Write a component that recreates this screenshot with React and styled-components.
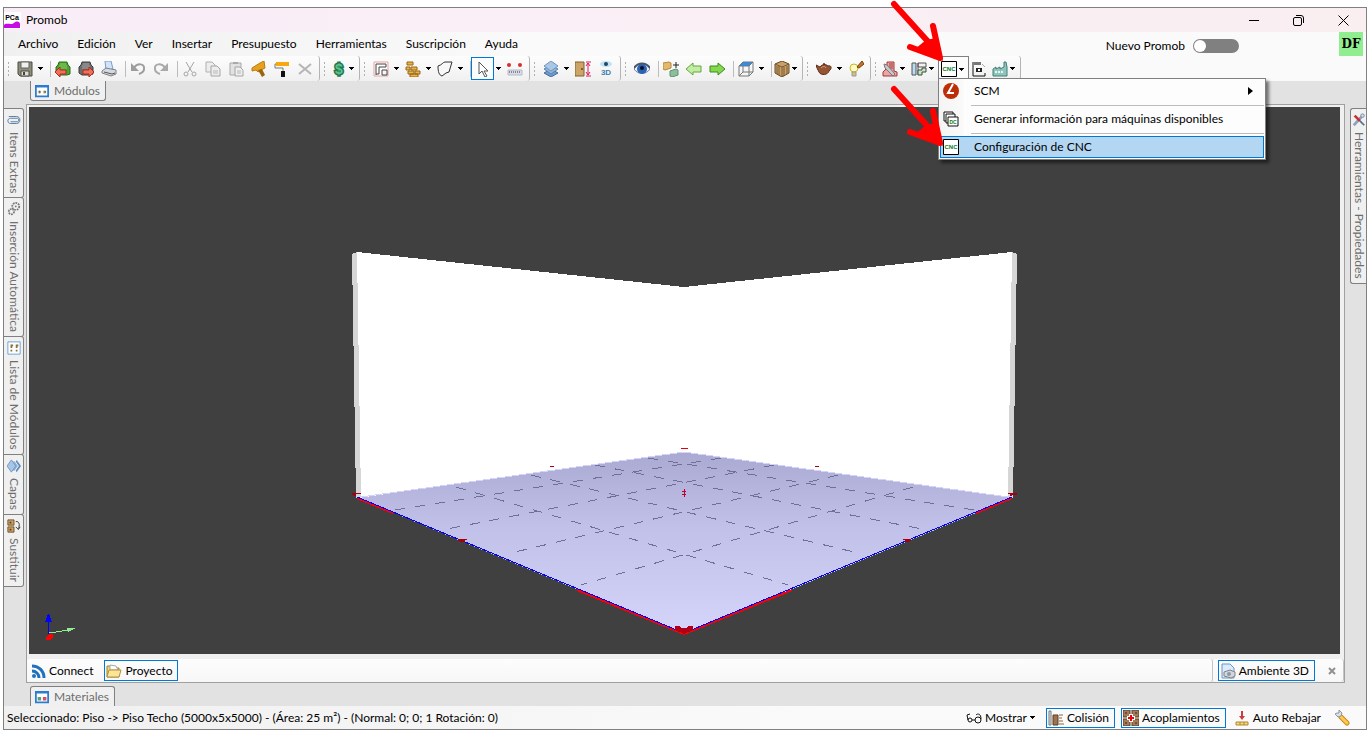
import React, { useState } from "react";
import styled, { createGlobalStyle, css } from "styled-components";

const colors = {
    chrome: "#e2e2e2",
    border: "#808080",
    line: "#a0a0a0",
    panel: "#f0f0f0",
    accent: "#0078d7",
    highlight: "#b3d7f3",
    viewport: "#404040",
    tabText: "#6d6d6d",
};

const GlobalStyle = createGlobalStyle`
    * { box-sizing: border-box; }
    body {
        margin: 0;
        background: #fff;
        color: #000;
        font-family: Lato, "Open Sans", sans-serif;
        font-size: 12px;
        line-height: 16px;
    }
    button, input {
        font: inherit;
        color: inherit;
    }
    svg { display: block; flex: none; }
`;

const Page = styled.div`
    display: flex;
    min-height: 100vh;
    padding: 7px 2px 7px 3px;
`;

const Window = styled.div`
    flex: 1;
    min-width: 0;
    display: flex;
    flex-direction: column;
    border: 1px solid ${colors.border};
    background: ${colors.chrome};
`;

const TitleBar = styled.header`
    display: flex;
    align-items: center;
    height: 24px;
    background: linear-gradient(90deg, #f9eef8, #f9eff1);
`;

const Title = styled.h1`
    flex: 1;
    margin: 0 0 0 5px;
    font-size: 12px;
    font-weight: 400;
`;

const WindowButton = styled.button`
    display: flex;
    align-items: center;
    justify-content: center;
    width: 45px;
    height: 24px;
    padding: 0;
    border: 0;
    background: none;
`;

const HeaderArea = styled.div`
    background: linear-gradient(90deg, #f0f0f0, #fafafa 40%);
`;

const MenuBar = styled.nav`
    display: flex;
    align-items: flex-start;
    gap: 1px;
    height: 24px;
    padding-left: 5px;
`;

const MenuButton = styled.button`
    height: 24px;
    padding: 0 9px;
    border: 0;
    background: none;
`;

const Spacer = styled.div`
    flex: 1;
`;

const SwitchLabel = styled.label`
    display: flex;
    align-items: center;
    gap: 8px;
    height: 27px;
    margin-right: 99px;
`;

const Switch = styled.input`
    appearance: none;
    display: flex;
    align-items: center;
    width: 46px;
    height: 14px;
    margin: 0;
    padding: 1px;
    border-radius: 7px;
    background: ${colors.border};

    &::before {
        content: "";
        width: 12px;
        height: 12px;
        border-radius: 50%;
        background: #fff;
    }
    &:checked { justify-content: flex-end; }
`;

const UserBadge = styled.button`
    width: 24px;
    height: 24px;
    margin-right: 3px;
    padding: 0;
    border: 0;
    background: #90ee90;
    font-family: "DejaVu Serif", serif;
    font-size: 12px;
    font-weight: 700;
`;

const ToolBar = styled.div`
    display: flex;
    height: 25px;
`;

const ToolGroup = styled.div`
    display: flex;
    align-items: center;
    height: 25px;
    padding-right: ${(props) => (props.$snug ? "1px" : "3px")};
    border-right: 1px solid #b4b4b4;
    border-radius: 0 3px 3px 0;
    background: linear-gradient(#fdfdfd, #f0f0f0);
`;

const Grip = styled.span`
    width: 9px;
    height: 15px;
    background: radial-gradient(circle, #b0b0b0 1px, transparent 1px) 3px 0 / 3px 4px repeat-y;
`;

const ToolButton = styled.button`
    display: flex;
    align-items: center;
    justify-content: center;
    width: ${(props) => (props.$snug ? "20px" : "23px")};
    height: 23px;
    padding: 0;
    border: 1px solid ${(props) => (props.$active ? colors.accent : "transparent")};
    background: ${(props) => (props.$active ? "#fbfcfe" : "none")};
`;

const CaretButton = styled.button`
    display: flex;
    align-items: center;
    justify-content: ${(props) => (props.$snug ? "flex-start" : "center")};
    width: 9px;
    height: 23px;
    padding: 0;
    border: 0;
    background: none;
`;

const ToolSeparator = styled.span`
    width: 6px;
    height: 16px;
    border-right: 1px solid #bdbdbd;
`;

const CncAnchor = styled.div`
    position: relative;
    display: flex;
    align-items: center;
    height: 25px;
    border: 1px solid ${colors.border};
    border-bottom: 0;
    background: #fcfcfc;
    margin-right: -2px;
`;

const Menu = styled.ul`
    position: absolute;
    z-index: 2;
    top: 21px;
    left: -1px;
    width: 328px;
    margin: 0;
    padding: 1px;
    list-style: none;
    border: 1px solid ${colors.border};
    background: linear-gradient(90deg, #f4f4f4, #fafafa 24px, #fdfdfd 25px);
    box-shadow: 3px 3px 3px rgba(0, 0, 0, 0.5);
`;

const MenuItem = styled.button`
    display: flex;
    align-items: center;
    gap: 15px;
    width: 100%;
    height: 22px;
    padding: 0 10px 0 2px;
    text-align: left;
    border: 1px solid ${(props) => (props.$active ? colors.accent : "transparent")};
    background: ${(props) => (props.$active ? colors.highlight : "none")};
`;

const MenuLabel = styled.span`
    flex: 1;
`;

const MenuDivider = styled.li`
    height: 1px;
    margin: 3px 0 2px 31px;
    background: #bdbdbd;
`;

const Pointer = styled.svg`
    position: absolute;
    z-index: 3;
    left: -49px;
    top: ${(props) => props.$top};
    pointer-events: none;
`;

const Body = styled.div`
    flex: 1;
    display: flex;
    min-height: 0;
`;

const SideStrip = styled.aside`
    width: 22px;
    padding-top: 27px;
    ${(props) => props.$right && css`
        width: 21px;
        padding-left: 5px;
    `}
`;

const SideTab = styled.button`
    display: flex;
    align-items: center;
    gap: 5px;
    width: 20px;
    height: auto;
    margin-bottom: -1px;
    padding: 4px 0;
    writing-mode: vertical-rl;
    color: ${colors.tabText};
    border: 1px solid ${colors.border};
    background: ${colors.panel};
    ${(props) => props.$right ? css`
        width: 16px;
        border-right: 0;
        border-radius: 3px 0 0 3px;
    ` : css`
        border-left: 0;
        border-radius: 0 3px 3px 0;
    `}
`;

const Center = styled.main`
    flex: 1;
    min-width: 0;
    display: flex;
    flex-direction: column;
`;

const DockTab = styled.button`
    display: flex;
    align-items: center;
    gap: 5px;
    height: 20px;
    margin: ${(props) => (props.$bottom ? "3px 0 0 4px" : "0 0 3px 4px")};
    align-self: flex-start;
    padding: 0 5px 0 4px;
    color: ${colors.tabText};
    border: 1px solid ${colors.border};
    background: ${colors.panel};
    ${(props) => props.$bottom ? css`
        border-bottom: 0;
        border-radius: 3px 3px 0 0;
    ` : css`
        border-top: 0;
        border-radius: 0 0 3px 3px;
    `}
`;

const Panel = styled.section`
    flex: 1;
    display: flex;
    flex-direction: column;
    gap: 5px;
    min-height: 0;
    border: 1px solid ${colors.line};
    background: ${colors.panel};
`;

const Viewport = styled.div`
    flex: 1;
    display: flex;
    min-height: 0;
    margin: 2px 4px 0 2px;
    background: ${colors.viewport};

    svg {
        flex: 1;
        width: 100%;
        min-width: 0;
    }
`;

const PanelBar = styled.div`
    display: flex;
    justify-content: space-between;
    height: 23px;
`;

const BarSection = styled.div`
    display: flex;
    align-items: center;
    gap: 6px;
    padding: 0 ${(props) => (props.$closable ? "4px" : "0")} 0 ${(props) => (props.$closable ? "5px" : "1px")};
    flex: ${(props) => (props.$grow ? 1 : "none")};
    border-right: 1px solid #c4c4c4;
    border-radius: 3px;
    background: linear-gradient(#fdfdfd, #f7f7f7);
`;

const BarButton = styled.button`
    display: flex;
    align-items: center;
    gap: 3px;
    height: ${(props) => (props.$low ? "20px" : "21px")};
    padding: 0 ${(props) => (props.$active ? "5px" : "4px")} 0 1px;
    white-space: nowrap;
    border: 1px solid ${(props) => (props.$active ? colors.accent : "transparent")};
    background: none;
`;

const CloseButton = styled.button`
    display: flex;
    margin-left: 4px;
    padding: 2px;
    border: 0;
    background: none;
`;

const StatusBar = styled.footer`
    display: flex;
    align-items: center;
    gap: 6px;
    height: 23px;
    padding: 0 11px 0 3px;
    background: linear-gradient(90deg, #f0f0f0, #fafafa 60%);
`;

const StatusText = styled.p`
    flex: 1;
    margin: 0;
    white-space: nowrap;
`;

const drawings = {
    save: <><path d="M1 1h14v14H3l-2-2z" fill="#8d8d7b" stroke="#4c4c42" /><path d="M4 1h8v6H4z" fill="#eef0f4" stroke="#66665c" /><path d="M4 10h8v5H4z" fill="#dcdcd0" stroke="#4c4c42" /><path d="M6 11h2v3H6z" fill="#444" /></>,
    chairIn: <><path d="M4 1h8l1 3 2 2v7l-3 1H4l-3-2V6l2-2z" fill="#4aa52e" stroke="#2d6e1c" /><path d="M5 3h6M4 5h8M5 7h7" stroke="#86d166" /><path d="M0 11l5-5v3h6v4H5v3z" fill="#f0705c" stroke="#b22a1c" /></>,
    chairOut: <><path d="M4 1h8l1 3 2 2v7l-3 1H4l-3-2V6l2-2z" fill="#6d6d6d" stroke="#3d3d3d" /><path d="M5 3h6M4 5h8M4 7h7" stroke="#a6a6a6" /><path d="M16 11l-5-5v3H5v4h6v3z" fill="#f0705c" stroke="#b22a1c" /></>,
    printer: <><path d="M4 0h6l2 8-7 1z" fill="#cfe3fa" stroke="#7f9cc4" /><path d="M1 10l4-3 10 2v4l-5 2-9-3z" fill="#d6d9de" stroke="#7d828c" /><path d="M3 11l8 2 3-1" stroke="#555" fill="none" /></>,
    undo: <><path d="M4 7c3-5 11-5 10 1 0 2-2 4-5 5" fill="none" stroke="#9d9d9d" strokeWidth="2" /><path d="M1 2v8h8z" fill="#9d9d9d" /></>,
    redo: <><path d="M12 7C9 2 1 2 2 8c0 2 2 4 5 5" fill="none" stroke="#a9a9a9" strokeWidth="2" /><path d="M15 2v8H7z" fill="#a9a9a9" /></>,
    cut: <><path d="M4 1l6 10M12 1L6 11" stroke="#a5a5a5" fill="none" /><circle cx="4" cy="13" r="2" fill="none" stroke="#a5a5a5" /><circle cx="12" cy="13" r="2" fill="none" stroke="#a5a5a5" /></>,
    copy: <><path d="M1 1h6l3 3v7H1z" fill="#ededed" stroke="#b0b0b0" /><path d="M6 5h6l3 3v7H6z" fill="#ededed" stroke="#a5a5a5" /><path d="M8 10h5M8 12h5" stroke="#b8b8b8" /></>,
    paste: <><path d="M2 2h11v12H2z" fill="#e2e2e2" stroke="#a9a9a9" /><path d="M5 1h5v2H5z" fill="#aaa" /><path d="M7 6h5l3 3v6H7z" fill="#efefef" stroke="#a5a5a5" /><path d="M9 10h4M9 12h4" stroke="#b8b8b8" /></>,
    hammer: <><path d="M1 7l8-5 4-2 1 7-4 2-3 2-2-2-4 1z" fill="#e6a21c" stroke="#b87a10" /><path d="M7 9l4-1 3 6-3 2z" fill="#9a6412" /></>,
    roller: <><path d="M2 1h13v4H2z" fill="#f7a80c" /><path d="M2 3H1v4h8v3" fill="none" stroke="#777" /><path d="M7 10h4v6H7z" fill="#111" /></>,
    remove: <path d="M2 3l12 10M14 3L2 13" stroke="#b5b5b5" strokeWidth="2" />,
    walls: <><path d="M1 1h14v14H1z" fill="#fff" stroke="#e9a0a0" /><path d="M3 14V3h10v3H6v7H3" fill="none" stroke="#444" /><path d="M9 9h5v5H9z" fill="#f7f7f7" stroke="#444" /></>,
    bricks: <><path d="M2 1h6v3H2zM1 6h4v3H1zM6 6h6v3H6zM3 10h6v3H3zM10 10h5v3h-5zM5 13h8v3H5z" fill="#e6b455" stroke="#9a660e" /></>,
    shape: <path d="M1 5c4-1 5-4 7-4h7l-3 10-3 1-4 3c-3-1-4-4-4-10z" fill="#f8f8f8" stroke="#333" />,
    pointer: <path d="M4 1v12l3-3 3 6 2-1-3-5h4z" fill="#fff" stroke="#555" />,
    measure: <><path d="M1 9h14v5H1z" fill="#d9dce8" stroke="#b6bac8" /><path d="M2 11h12" stroke="#333" strokeDasharray="1 1" /><circle cx="2" cy="4" r="2" fill="#d92e2e" /><circle cx="13" cy="4" r="2" fill="#d92e2e" /></>,
    layers: <><path d="M8 8l7 4-7 4-7-4z" fill="#6c9acb" stroke="#456c9a" /><path d="M8 4l7 4-7 5-7-5z" fill="#8fb4da" stroke="#5c84b0" /><path d="M8 0l7 5-7 5-7-5z" fill="#a9c7e6" stroke="#7495b9" /></>,
    door: <><path d="M0 1h9v14H0z" fill="#cda468" stroke="#80602f" /><circle cx="7" cy="8" r="1" fill="#64460e" /><path d="M13 2v12M11 1h5M11 15h5M11 5l2-3 2 3M11 11l2 3 2-3" fill="none" stroke="#df1c57" /></>,
    eye3d: <><ellipse cx="8" cy="3" rx="6" ry="3" fill="#bfe3f6" /><circle cx="8" cy="3" r="2" fill="#1f4763" /></>,
    eye: <><path d="M0 8c4-7 12-7 16 0-4 6-12 6-16 0z" fill="#eef2f8" stroke="#7886a0" /><circle cx="8" cy="8" r="5" fill="#2b63b4" /><circle cx="8" cy="7" r="2" fill="#06142c" /><path d="M0 7c4-6 12-6 16 0" fill="none" stroke="#47566e" strokeWidth="2" /></>,
    boxes: <><path d="M0 2l6-1 2 1v5l-6 2-2-1z" fill="#e3b96c" stroke="#b4883e" /><path d="M7 10l6-2 2 1v5l-6 2-2-1z" fill="#8bbf9e" stroke="#5d8f70" /><path d="M10 4h6M13 1v6" stroke="#222" fill="none" /></>,
    arrowLeft: <path d="M0 8l7-6v3h8v6H7v3z" fill="#c4eca4" stroke="#60a83c" />,
    arrowRight: <path d="M16 8L9 2v3H1v6h8v3z" fill="#84d850" stroke="#3f8a20" />,
    cube: <><path d="M1 5l4-4h10l-4 4z" fill="#2e8ef0" /><path d="M1 5h10v10H1zM11 5l4-4v10l-4 4M1 5l4-4h10M5 5v6h10M5 11l-4 4" fill="none" stroke="#777" /></>,
    wood: <><path d="M8 0l7 3v9l-7 4-7-4V3z" fill="#c9a16b" stroke="#684a20" /><path d="M1 3l7 3 7-3M8 6v10M3 5v8M5 5v9M10 6v9M13 5v8" fill="none" stroke="#7a5a2c" /></>,
    teapot: <><path d="M0 4l4 2c2-3 6-3 8-1 4-1 4 3 1 5-1 4-8 5-10 1L1 7z" fill="#955533" stroke="#5c2f19" /><path d="M5 7c2-2 4-2 5 0" stroke="#dba380" fill="none" /><circle cx="8" cy="3" r="1" fill="#5c2f19" /></>,
    bulb: <><circle cx="6" cy="7" r="4" fill="#fffac0" stroke="#c8b42c" /><path d="M4 11h4v4H4z" fill="#d0c478" stroke="#999" /><path d="M9 6l5-6 2 3-5 4z" fill="#c5761c" stroke="#774010" /></>,
    tool: <><path d="M5 1h7v9l3 1v4H1v-4l4-4z" fill="#e9a6a6" stroke="#a83636" /><path d="M7 3h4M7 5h4M7 7h4" stroke="#a83636" /><path d="M2 3l3 1 8 9-2 2L3 7z" fill="#c8c8c8" stroke="#777" /></>,
    cutlist: <><path d="M1 2h4v12H1z" fill="#b7dcf4" stroke="#555" /><path d="M7 2h8v4H7zM7 2v12" fill="#f1f1f1" stroke="#555" /><path d="M7 9h4V7h4v4h-4v3H7z" fill="#c0ecc0" stroke="#444" /></>,
    cnc: <path d="M.5 .5h15v15H.5z" fill="#fff" stroke="#000" />,
    label: <><path d="M2 1v14h12v-3" fill="none" stroke="#111" /><path d="M3 1h7v3H3z" fill="#777" /><path d="M5 7h6v4H5z" fill="#222" /><path d="M7 8h2v2H7z" fill="#fff" /><path d="M11 3l3 3" stroke="#aaa" /></>,
    factory: <><path d="M1 15V8l3-2v2l4-2v2l4-2V1h2l1 5v9z" fill="#8fc5bd" stroke="#407f78" /><path d="M3 11h9" stroke="#e5f4f1" strokeDasharray="2 1" strokeWidth="2" /></>,
    scm: <><circle cx="8" cy="8" r="8" fill="#bd2d08" /><path d="M10 1L5 10h6" fill="none" stroke="#fff" strokeWidth="2" /></>,
    stack: <><path d="M1 1h9v9H1z" fill="#fff" stroke="#111" /><path d="M3 3h9v9H3z" fill="#fff" stroke="#111" /><path d="M5 6h10v9H5z" fill="#fff" stroke="#111" /></>,
    clip: <path d="M2 4h9c5 0 5 8 0 8H4c-4 0-4-6 0-6h8c2 0 2 4 0 4H4" fill="none" stroke="#4c759c" />,
    gears: <><circle cx="10" cy="5" r="4" fill="none" stroke="#777" strokeDasharray="2 1" strokeWidth="2" /><circle cx="5" cy="11" r="3" fill="none" stroke="#777" strokeDasharray="2 1" strokeWidth="2" /><circle cx="10" cy="5" r="1" fill="#777" /></>,
    list: <><path d="M1 1h14v14H1z" fill="#fff" stroke="#5b9bd5" /><path d="M4 5h3M10 5h3M5 6v2M11 6v2M4 11h2M10 11h2" stroke="#8a6e3c" strokeWidth="2" /></>,
    layersSide: <><path d="M7 8l4-7 5 7-5 7z" fill="#5d8dc0" /><path d="M3 8l5-7 5 7-5 7z" fill="#8db2da" stroke="#fff" /><path d="M0 8l5-7 5 7-5 7z" fill="#a8c6e4" stroke="#6e95bf" /></>,
    swap: <><path d="M1 1h7v6H1zM1 9h7v6H1z" fill="#caa06a" stroke="#6c4a20" /><path d="M3 4h2M3 12h2" stroke="#5a3a10" strokeWidth="2" /><path d="M10 3c4-1 5 4 3 8M10 9l3 3 2-3" fill="none" stroke="#222" /></>,
    crossTools: <><path d="M2 14L13 2" stroke="#8ea2b8" strokeWidth="3" /><path d="M3 3l6 6" stroke="#c72e35" strokeWidth="3" /><path d="M9 9l5 5" stroke="#52708f" strokeWidth="2" /><circle cx="12" cy="3" r="2" fill="#d5e0ec" stroke="#6b829b" /></>,
    modules: <><path d="M1 2h14v12H1z" fill="#fff" stroke="#2b7cd3" strokeWidth="2" /><path d="M1 2h14v2H1z" fill="#2b7cd3" /><circle cx="5" cy="9" r="2" fill="#c5bc9a" /><circle cx="11" cy="9" r="2" fill="#c5bc9a" /><path d="M5 9h1M11 9h1" stroke="#222" strokeWidth="2" /></>,
    materials: <><path d="M1 2h14v12H1z" fill="#fff" stroke="#2b7cd3" strokeWidth="2" /><path d="M1 2h14v2H1z" fill="#2b7cd3" /><path d="M3 8h4v4H3z" fill="#59a17b" /><path d="M9 8h4v4H9z" fill="#d4525a" /></>,
    feed: <><circle cx="4" cy="13" r="2" fill="#1f71be" /><path d="M2 8c4 0 7 3 7 7M2 3c7 0 12 5 12 12" fill="none" stroke="#1f71be" strokeWidth="3" /></>,
    folder: <><path d="M1 3h5l1 2h6v9H1z" fill="#f3d472" stroke="#a3802b" /><path d="M4 2l6 1 2 4H4z" fill="#fff" stroke="#aaa" /><path d="M3 7h12l-2 7H1z" fill="#fbe596" stroke="#b4913a" /></>,
    scene: <><path d="M2 1h8l4 4v10H2z" fill="#dcebfb" stroke="#6f94c2" /><path d="M4 9l6-2 5 2v4l-4 2-7-2z" fill="#d4d6da" stroke="#7c828c" /><circle cx="9" cy="11" r="2" fill="#8e99a8" /></>,
    close: <path d="M2 2l6 6M8 2L2 8" stroke="#909090" strokeWidth="2" />,
    glasses: <><circle cx="4" cy="10" r="2" fill="none" stroke="#111" /><circle cx="12" cy="10" r="3" fill="none" stroke="#111" /><path d="M6 10h3M2 10L1 5l3-1M15 9c0-5-3-6-5-4" fill="none" stroke="#111" /></>,
    collision: <><path d="M1 1h2v14H1z" fill="#e8e8e8" stroke="#777" /><path d="M5 5h5v10H5z" fill="#9c7350" stroke="#5c3c22" /><path d="M11 5h4M11 8h3M11 11h4M11 14h5" stroke="#8a6848" /></>,
    joints: <><path d="M0 0h7v7H0zM9 0h7v7H9zM0 9h7v7H0zM9 9h7v7H9z" fill="#a47a57" stroke="#5d3f28" /><path d="M2 3h2M12 3h2M2 13h2M12 13h2" stroke="#3d2412" /><path d="M8 4v8M4 8h8" stroke="#fff" strokeWidth="4" /><path d="M8 5v6M5 8h6" stroke="#e80808" strokeWidth="2" /></>,
    lower: <><path d="M7 1h2v5h2l-3 4-3-4h2z" fill="#cb3d3d" /><path d="M2 12h12v3H2z" fill="#f5d583" stroke="#b28827" /><path d="M6 12v3M10 12v3" stroke="#b28827" /></>,
    wrench: <><path d="M7 7l6 6" stroke="#c8871c" strokeWidth="5" strokeLinecap="round" /><path d="M7 7l6 6" stroke="#ffc94b" strokeWidth="3" strokeLinecap="round" /><path d="M1 4l3 3 3-1 1-3-3-3v3H3z" fill="#dde1e6" stroke="#8e959e" /></>,
};

const iconWords = {
    dollar: { text: "$", x: 8, y: 13, size: 14, fill: "#59c48c", stroke: "#27744c", strokeWidth: 3 },
    eye3d: { text: "3D", x: 8, y: 14, size: 8, fill: "#3d7fae" },
    cnc: { text: "CNC", x: 8, y: 10, size: 6, fill: "#087a18" },
    stack: { text: "DC", x: 10, y: 13, size: 5, fill: "#087a18" },
};

const IconText = styled.text`
    font-family: "Liberation Sans", sans-serif;
    font-weight: 700;
    text-anchor: middle;
    paint-order: stroke;
`;

const Icon = ({ name, size = 16 }) => {
    const { text, size: fontSize, ...word } = iconWords[name] || {};

    return (
        <svg width={size} height={size} viewBox="0 0 16 16" aria-hidden="true">
            {drawings[name]}
            {text && <IconText fontSize={fontSize} {...word}>{text}</IconText>}
        </svg>
    );
};

const Caret = () => (
    <svg width="5" height="3" viewBox="0 0 5 3" aria-hidden="true" shapeRendering="crispEdges">
        <path d="M0 0h5L3 3H2z" />
    </svg>
);

const AppLogo = () => (
    <svg width="17" height="17" viewBox="0 0 17 17" aria-hidden="true">
        <path d="M0 0h17v17H0z" fill="#fff" />
        <path d="M1 12c4-1 6 1 9-1 3-3 6-1 6 1v4H0v-3z" fill="#c60ce0" />
        <IconText x="8" y="8" fontSize="7">PCa</IconText>
    </svg>
);

const menus = ["Archivo", "Edición", "Ver", "Insertar", "Presupuesto", "Herramientas", "Suscripción", "Ayuda"];

// "|" is a separator, "v" a drop-down caret for the button before it
const toolGroups = [
    { tools: ["save", "v", "|", "chairIn", "chairOut", "printer", "|", "undo", "redo", "|", "cut", "copy", "paste", "hammer", "roller", "remove"] },
    { snug: ["dollar"], tools: ["dollar", "v"] },
    { tools: ["walls", "v", "bricks", "v", "shape", "v", "|", "pointer", "v", "measure"] },
    { tools: ["layers", "v", "door", "eye3d"] },
    { snug: ["wood"], tools: ["eye", "|", "boxes", "arrowLeft", "arrowRight", "|", "cube", "v", "|", "wood", "v"] },
    { tools: ["teapot", "v", "bulb"] },
];

const leftTabs = [
    { icon: "clip", text: "Itens Extras" },
    { icon: "gears", text: "Inserción Automática" },
    { icon: "list", text: "Lista de Módulos" },
    { icon: "layersSide", text: "Capas" },
    { icon: "swap", text: "Sustituir" },
];

const Tool = ({ name, active, snug }) => (
    <ToolButton type="button" aria-label={name} $active={active} $snug={snug}>
        <Icon name={name} />
    </ToolButton>
);

const ToolCaret = ({ snug, ...rest }) => (
    <CaretButton type="button" aria-label="Más opciones" $snug={snug} {...rest}>
        <Caret />
    </CaretButton>
);

const RedPointer = ({ top }) => (
    <Pointer width="60" height="64" viewBox="0 0 60 64" $top={top} aria-hidden="true">
        <path d="M4 4L42 46" stroke="#f00" strokeWidth="6" strokeLinecap="round" />
        <path d="M43 26L50 58L20 47" fill="none" stroke="#f00" strokeWidth="6" strokeLinecap="round" strokeLinejoin="round" />
        <path d="M36 40L46 38L53 61L25 49z" fill="#f00" />
    </Pointer>
);

const CncMenu = () => (
    <Menu>
        <li>
            <MenuItem type="button">
                <Icon name="scm" />
                <MenuLabel>SCM</MenuLabel>
                <svg width="5" height="8" viewBox="0 0 5 8" aria-hidden="true"><path d="M0 0l5 4-5 4z" /></svg>
            </MenuItem>
        </li>
        <MenuDivider />
        <li>
            <MenuItem type="button">
                <Icon name="stack" />
                <MenuLabel>Generar información para máquinas disponibles</MenuLabel>
            </MenuItem>
        </li>
        <MenuDivider />
        <li>
            <MenuItem type="button" $active>
                <Icon name="cnc" />
                <MenuLabel>Configuración de CNC</MenuLabel>
            </MenuItem>
        </li>
    </Menu>
);

const MainToolBar = () => {
    const [open, setOpen] = useState(true);

    return (
        <ToolBar>
            {toolGroups.map((group, i) => (
                <ToolGroup key={i} $snug={Boolean(group.snug)}>
                    <Grip />
                    {group.tools.map((tool, j) => {
                        const owner = tool === "v" ? group.tools[j - 1] : tool;
                        const snug = Boolean(group.snug && group.snug.includes(owner));
                        if (tool === "|") return <ToolSeparator key={j} />;
                        if (tool === "v") return <ToolCaret key={j} snug={snug} />;
                        return <Tool key={j} name={tool} active={tool === "pointer"} snug={snug} />;
                    })}
                </ToolGroup>
            ))}
            <ToolGroup $snug>
                <Grip />
                <Tool name="tool" snug />
                <ToolCaret snug />
                <Tool name="cutlist" snug />
                <ToolCaret snug />
                <CncAnchor>
                    <Tool name="cnc" snug />
                    <ToolCaret snug onClick={() => setOpen(!open)} />
                    {open && <CncMenu />}
                    <RedPointer top="-57px" />
                    <RedPointer top="28px" />
                </CncAnchor>
                <Tool name="label" />
                <Tool name="factory" snug />
                <ToolCaret snug />
            </ToolGroup>
        </ToolBar>
    );
};

// one metre grid lines of the floor; each is mirrored about the room's axis
const gridLines = [
    [456, 487, 788, 585],
    [531, 475, 858, 553],
    [595, 465, 922, 529],
    [648, 458, 974, 510],
];

const Room = () => (
    <svg viewBox="29 107 1311 547" role="img" aria-label="Ambiente 3D">
        <defs>
            <linearGradient id="floor" x1="0" y1="0" x2="0" y2="1">
                <stop offset="0" stopColor="#a9a9d2" />
                <stop offset="0.4" stopColor="#c0c0e8" />
                <stop offset="1" stopColor="#d5d5fb" />
            </linearGradient>
        </defs>
        <g shapeRendering="crispEdges">
            <path d="M352 254l5-2 4 246h-5zM1017 254l-5-2-4 246h5z" fill="#d6d6d6" />
            <path d="M357 252l327 35 328-35-4 246H361z" fill="#fff" />
            <path d="M358 498l326-46 328 46-328 136z" fill="url(#floor)" />
            <path d="M361 497l323-45 324 45" fill="none" stroke="#d4d4fa" />
            <g stroke="#6f6f98" strokeDasharray="10 10">
                {gridLines.map(([x1, y1, x2, y2]) => (
                    <React.Fragment key={x1}>
                        <path d={`M${x1} ${y1}L${x2} ${y2}`} />
                        <path d={`M${1369 - x1} ${y1}L${1369 - x2} ${y2}`} />
                    </React.Fragment>
                ))}
            </g>
            <path d="M357 498l36 15M577 590l107 44 108-44M1012 498l-36 15" fill="none" stroke="#f00" strokeWidth="2" />
            <path d="M357 497l327 136 328-136" fill="none" stroke="#00f" />
            <path d="M352 493h9v1h-5v2h-2v-1h-2zM458 539h9v1h-2v2h-5v-1h-2zM1008 493h9v2h-5v1h-2v-2h-2zM903 539h8v2h-2v1h-4v-2h-2zM550 466h4v1h-4zM815 466h4v1h-4z" fill="#a00010" />
            <path d="M681 448h7v1h-7z" fill="#e00010" />
            <path d="M675 626h5l1 2h6l1-2h5v4l-9 4-9-4z" fill="#b00018" />
            <path d="M684 489h1v8h-1zM682 491h4v1h-4zM682 494h4v1h-4z" fill="#c00030" />
            <path d="M48 618h1v16h-1zM48 614h1l3 8h-7z" fill="#00f" />
            <path d="M49 633l20-3" stroke="#90ee90" />
            <path d="M67 628l9 0-8 4z" fill="#90ee90" />
            <path d="M46 637l3-3h4v3l-3 3h-4z" fill="#f00" />
        </g>
    </svg>
);

const App = () => {
    const [nuevo, setNuevo] = useState(false);

    return (
        <>
            <GlobalStyle />
            <Page>
                <Window>
                    <TitleBar>
                        <AppLogo />
                        <Title>Promob</Title>
                        <WindowButton type="button" aria-label="Minimizar">
                            <svg width="10" height="10" viewBox="0 0 10 10"><path d="M0 5h10v1H0z" /></svg>
                        </WindowButton>
                        <WindowButton type="button" aria-label="Restaurar">
                            <svg width="11" height="11" viewBox="0 0 11 11" fill="none" stroke="#000"><rect x=".5" y="2.500" width="8" height="8" rx="1.500" /><path d="M3 .5h5a2.500 2.500 0 0 1 2.500 2.500v5" /></svg>
                        </WindowButton>
                        <WindowButton type="button" aria-label="Cerrar">
                            <svg width="11" height="11" viewBox="0 0 11 11" stroke="#000"><path d="M.5 .5l10 10M10.500 .5l-10 10" /></svg>
                        </WindowButton>
                    </TitleBar>

                    <HeaderArea>
                        <MenuBar>
                            {menus.map((menu) => (
                                <MenuButton type="button" key={menu}>{menu}</MenuButton>
                            ))}
                            <Spacer />
                            <SwitchLabel>
                                Nuevo Promob
                                <Switch type="checkbox" role="switch" checked={nuevo} onChange={() => setNuevo(!nuevo)} />
                            </SwitchLabel>
                            <UserBadge type="button">DF</UserBadge>
                        </MenuBar>
                        <MainToolBar />
                    </HeaderArea>

                    <Body>
                        <SideStrip>
                            {leftTabs.map((tab) => (
                                <SideTab type="button" key={tab.text}>
                                    <Icon name={tab.icon} size={14} />
                                    {tab.text}
                                </SideTab>
                            ))}
                        </SideStrip>
                        <Center>
                            <DockTab type="button">
                                <Icon name="modules" size={14} />
                                Módulos
                            </DockTab>
                            <Panel>
                                <Viewport>
                                    <Room />
                                </Viewport>
                                <PanelBar>
                                    <BarSection $grow>
                                        <BarButton type="button">
                                            <Icon name="feed" />
                                            Connect
                                        </BarButton>
                                        <BarButton type="button" $active>
                                            <Icon name="folder" />
                                            Proyecto
                                        </BarButton>
                                    </BarSection>
                                    <BarSection $closable>
                                        <BarButton type="button" $active>
                                            <Icon name="scene" />
                                            Ambiente 3D
                                        </BarButton>
                                        <CloseButton type="button" aria-label="Cerrar ambiente">
                                            <svg width="10" height="10" viewBox="0 0 10 10">{drawings.close}</svg>
                                        </CloseButton>
                                    </BarSection>
                                </PanelBar>
                            </Panel>
                            <DockTab type="button" $bottom>
                                <Icon name="materials" size={14} />
                                Materiales
                            </DockTab>
                        </Center>
                        <SideStrip $right>
                            <SideTab type="button" $right>
                                <Icon name="crossTools" size={14} />
                                Herramientas - Propiedades
                            </SideTab>
                        </SideStrip>
                    </Body>

                    <StatusBar>
                        <StatusText>Seleccionado: Piso -&gt; Piso Techo (5000x5x5000) - (Área: 25 m²) - (Normal: 0; 0; 1 Rotación: 0)</StatusText>
                        <BarButton type="button" $low>
                            <Icon name="glasses" />
                            Mostrar
                            <Caret />
                        </BarButton>
                        <BarButton type="button" $low $active>
                            <Icon name="collision" />
                            Colisión
                        </BarButton>
                        <BarButton type="button" $low $active>
                            <Icon name="joints" />
                            Acoplamientos
                        </BarButton>
                        <BarButton type="button" $low>
                            <Icon name="lower" />
                            Auto Rebajar
                        </BarButton>
                        <BarButton type="button" $low aria-label="Ajustes">
                            <Icon name="wrench" />
                        </BarButton>
                    </StatusBar>
                </Window>
            </Page>
        </>
    );
};

export default App;
